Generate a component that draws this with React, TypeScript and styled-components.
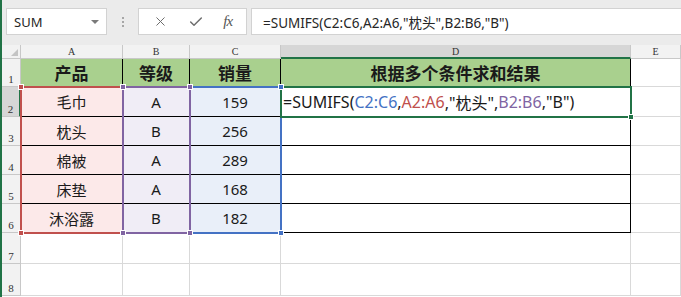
import React from 'react';
import styled, { createGlobalStyle } from 'styled-components';
import { X, Check } from 'lucide-react';

const GlobalStyle = createGlobalStyle`
  html, body {
    margin: 0;
    padding: 0;
    background: #ffffff;
    overflow: hidden;
  }
  * {
    box-sizing: border-box;
  }
`;

const GREEN = '#217346';
const RED = '#c0504d';
const PURPLE = '#8064a2';
const BLUE = '#4472c4';
const CJK = '"Noto Sans", "Noto Sans CJK SC", sans-serif';

const Window = styled.div`
  width: 681px;
  height: 297px;
  border-left: 2px solid ${GREEN};
  background: #ffffff;
  overflow: hidden;
  font-family: ${CJK};
`;

const FormulaBar = styled.div`
  display: flex;
  align-items: center;
  height: 45px;
  padding: 0 0 2px 4px;
  background: #ebebeb;
`;

const NameBox = styled.div`
  width: 101px;
  height: 27px;
  display: flex;
  align-items: center;
  padding-left: 7px;
  background: #ffffff;
  border: 1px solid #d2d2d2;
  font-size: 13px;
  color: #262626;
`;

const DropArrow = styled.span`
  margin-left: auto;
  margin-right: 7px;
  width: 0;
  height: 0;
  border-left: 4px solid transparent;
  border-right: 4px solid transparent;
  border-top: 4px solid #7a7a7a;
`;

const Grip = styled.div`
  width: 31px;
  display: flex;
  flex-direction: column;
  align-items: center;
  gap: 2px;
`;

const GripDot = styled.span`
  width: 2px;
  height: 2px;
  background: #a6a6a6;
`;

const ButtonBox = styled.div`
  width: 109px;
  height: 27px;
  display: flex;
  align-items: center;
  justify-content: space-around;
  padding: 0 4px;
  background: #ffffff;
  border: 1px solid #d2d2d2;
  color: #6e6e6e;
`;

const Fx = styled.span`
  font-family: "Liberation Serif", serif;
  font-style: italic;
  font-size: 15px;
  color: #555555;
  letter-spacing: -1px;
`;

const FormulaInput = styled.div`
  flex: 1;
  margin-left: 4px;
  height: 27px;
  display: flex;
  align-items: center;
  padding-left: 11px;
  background: #ffffff;
  border: 1px solid #d2d2d2;
  border-right: none;
  font-size: 13.5px;
  color: #262626;
  white-space: nowrap;
`;

// two grids of the same tracks stacked in one cell: cells below, range marks above
const SheetStack = styled.div`
  display: grid;
`;

const Sheet = styled.div`
  grid-area: 1 / 1;
  display: grid;
  grid-template-columns: 19px 102px 67px 91px 350px 1fr;
  grid-template-rows: 14px 28px 30px 29px 29px 29px 29px 31px 32px;
`;

const Marks = styled(Sheet)`
  pointer-events: none;
`;

const Corner = styled.div`
  position: relative;
  background: #f2f2f2;
  border-right: 1px solid #c8c8c8;
  border-bottom: 1px solid #c8c8c8;

  &::after {
    content: '';
    position: absolute;
    right: 2px;
    bottom: 2px;
    border-left: 7px solid transparent;
    border-bottom: 7px solid #c4c4c4;
  }
`;

const ColHead = styled.div<{ $active?: boolean }>`
  display: flex;
  align-items: center;
  justify-content: center;
  background: ${(p) => (p.$active ? '#d6d6d6' : '#f2f2f2')};
  border-right: 1px solid #c8c8c8;
  border-bottom: ${(p) => (p.$active ? `2px solid ${GREEN}` : '1px solid #c8c8c8')};
  font-family: "Liberation Serif", serif;
  font-size: 10px;
  color: #333333;
`;

const RowHead = styled.div<{ $active?: boolean }>`
  display: flex;
  align-items: flex-end;
  justify-content: center;
  padding-bottom: 1px;
  background: ${(p) => (p.$active ? '#d6d6d6' : '#f2f2f2')};
  border-right: ${(p) => (p.$active ? `2px solid ${GREEN}` : '1px solid #c8c8c8')};
  border-bottom: 1px solid #c8c8c8;
  font-family: "Liberation Serif", serif;
  font-size: 11px;
  line-height: 12px;
  color: #333333;
`;

const Cell = styled.div<{ $fill?: string; $table?: boolean; $bold?: boolean; $left?: boolean }>`
  display: flex;
  align-items: center;
  justify-content: ${(p) => (p.$left ? 'flex-start' : 'center')};
  padding-left: ${(p) => (p.$left ? '2px' : '0')};
  background: ${(p) => p.$fill || '#ffffff'};
  border-right: 1px solid ${(p) => (p.$table ? '#000000' : '#d9d9d9')};
  border-bottom: 1px solid ${(p) => (p.$table ? '#000000' : '#d9d9d9')};
  font-size: ${(p) => (p.$bold ? '17px' : p.$left ? '16px' : '15px')};
  font-weight: ${(p) => (p.$bold ? 700 : 400)};
  color: #1a1a1a;
  white-space: nowrap;
`;

const RangeBox = styled.div<{ $color: string; $col: string; $row: string }>`
  grid-column: ${(p) => p.$col};
  grid-row: ${(p) => p.$row};
  position: relative;
  margin: -1px;
  border: 2px solid ${(p) => p.$color};
`;

const SelectBox = styled.div<{ $col: string; $row: string }>`
  grid-column: ${(p) => p.$col};
  grid-row: ${(p) => p.$row};
  position: relative;
  z-index: 3;
  margin: -1px;
  border: 2px solid ${GREEN};
`;

const Handle = styled.span<{ $color: string; $x: 'left' | 'right'; $y: 'top' | 'bottom' }>`
  position: absolute;
  z-index: 4;
  width: 6px;
  height: 6px;
  background: ${(p) => p.$color};
  border: 1px solid #ffffff;
  ${(p) => p.$x}: -4px;
  ${(p) => p.$y}: -4px;
`;

const Ref = styled.span<{ $color: string }>`
  color: ${(p) => p.$color};
`;

const rows = [
  { name: '毛巾', level: 'A', qty: 159 },
  { name: '枕头', level: 'B', qty: 256 },
  { name: '棉被', level: 'A', qty: 289 },
  { name: '床垫', level: 'A', qty: 168 },
  { name: '沐浴露', level: 'B', qty: 182 },
];

const PINK = '#fce9e9';
const LILAC = '#f0edf6';
const ICE = '#e9eff9';

function Formula() {
  return (
    <>
      =SUMIFS(<Ref $color={BLUE}>C2:C6</Ref>,<Ref $color={RED}>A2:A6</Ref>,"枕头",
      <Ref $color={PURPLE}>B2:B6</Ref>,"B")
    </>
  );
}

type Side = ['left' | 'right', 'top' | 'bottom'];

function Corners({ color, sides }: { color: string; sides: Side[] }) {
  return (
    <>
      {sides.map(([x, y]) => (
        <Handle key={x + y} $color={color} $x={x} $y={y} />
      ))}
    </>
  );
}

export default function App() {
  return (
    <Window>
      <GlobalStyle />
      <FormulaBar>
        <NameBox>
          SUM
          <DropArrow />
        </NameBox>
        <Grip>
          <GripDot />
          <GripDot />
          <GripDot />
        </Grip>
        <ButtonBox>
          <X size={15} strokeWidth={1.6} />
          <Check size={16} strokeWidth={2.2} />
          <Fx>fx</Fx>
        </ButtonBox>
        <FormulaInput>=SUMIFS(C2:C6,A2:A6,"枕头",B2:B6,"B")</FormulaInput>
      </FormulaBar>

      <SheetStack>
        <Sheet>
          <Corner />
          <ColHead>A</ColHead>
          <ColHead>B</ColHead>
          <ColHead>C</ColHead>
          <ColHead $active>D</ColHead>
          <ColHead>E</ColHead>

          <RowHead>1</RowHead>
          <Cell $table $bold $fill="#a9d08e">产品</Cell>
          <Cell $table $bold $fill="#a9d08e">等级</Cell>
          <Cell $table $bold $fill="#a9d08e">销量</Cell>
          <Cell $table $bold $fill="#a9d08e">根据多个条件求和结果</Cell>
          <Cell />

          {rows.map((r, i) => (
            <React.Fragment key={r.name}>
              <RowHead $active={i === 0}>{i + 2}</RowHead>
              <Cell $table $fill={PINK}>{r.name}</Cell>
              <Cell $table $fill={LILAC}>{r.level}</Cell>
              <Cell $table $fill={ICE}>{r.qty}</Cell>
              <Cell $table $left>{i === 0 ? <Formula /> : null}</Cell>
              <Cell />
            </React.Fragment>
          ))}

          {[7, 8].map((n) => (
            <React.Fragment key={n}>
              <RowHead>{n}</RowHead>
              <Cell />
              <Cell />
              <Cell />
              <Cell />
              <Cell />
            </React.Fragment>
          ))}
        </Sheet>

        <Marks>
          <RangeBox $color={RED} $col="2 / 3" $row="3 / 8">
            <Corners color={RED} sides={[['left', 'top'], ['left', 'bottom']]} />
          </RangeBox>
          <RangeBox $color={BLUE} $col="4 / 5" $row="3 / 8">
            <Corners color={BLUE} sides={[['right', 'top'], ['right', 'bottom']]} />
          </RangeBox>
          <RangeBox $color={PURPLE} $col="3 / 4" $row="3 / 8">
            <Corners
              color={PURPLE}
              sides={[['left', 'top'], ['right', 'top'], ['left', 'bottom'], ['right', 'bottom']]}
            />
          </RangeBox>
          <SelectBox $col="5 / 6" $row="3 / 4">
            <Handle $color={GREEN} $x="right" $y="bottom" />
          </SelectBox>
        </Marks>
      </SheetStack>
    </Window>
  );
}
